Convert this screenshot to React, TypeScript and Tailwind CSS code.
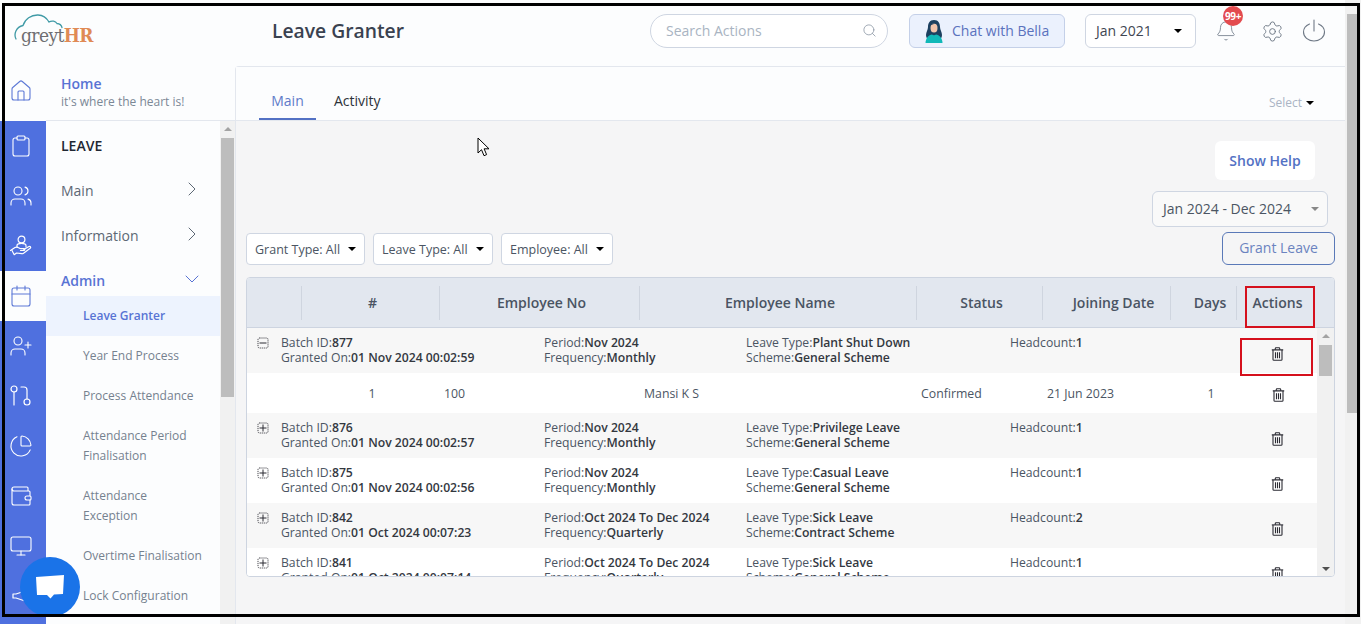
import { Bell, Calendar, ChevronDown, ChevronRight, Clipboard, House, Monitor, PieChart, Search, Settings, UserPlus, Users, Wallet } from "lucide-react";
import type { ReactNode } from "react";

function Caret({ className = "border-t-black" }: { className?: string }) {
  return <span className={`inline-block h-0 w-0 border-x-[4px] border-t-[4px] border-x-transparent ${className}`} />;
}

function HandIcon() {
  return (
    <svg width="24" height="24" viewBox="0 0 24 24" fill="none" stroke="currentColor" strokeWidth="1.2" strokeLinejoin="round" strokeLinecap="round">
      <circle cx="12.5" cy="5.5" r="3.4" />
      <path d="M8 13v-1.5c0-1.4 1.6-2.2 4.5-2.2s4.5.8 4.5 2.2V13" />
      <path d="M1.5 16.5 6 13.5c1.2-.7 2.2-.6 3.2 0l1.8 1h4c1 0 1 1.8 0 1.8h-3.500" />
      <path d="M14.800 15.500 20 12.600c1.300-.6 2.300.8 1.200 1.700l-6.700 5c-.6.4-1.200.5-1.900.4l-5.100-.7-2.300 1.700-2.200-4.200" />
    </svg>
  );
}

function BranchIcon() {
  return (
    <svg width="24" height="24" viewBox="0 0 24 24" fill="none" stroke="currentColor" strokeWidth="1.2" strokeLinecap="round">
      <circle cx="5" cy="5" r="3" />
      <path d="M5 8v13" />
      <path d="M12 3h3a3 3 0 0 1 3 3v9" />
      <circle cx="18" cy="18" r="3" />
    </svg>
  );
}

function SpeakerIcon() {
  return (
    <svg width="24" height="24" viewBox="0 0 24 24" fill="none" stroke="currentColor" strokeWidth="1.2" strokeLinejoin="round">
      <path d="M22 5 7 10H4v4h3l15 5z" />
    </svg>
  );
}

function TrashIcon() {
  return (
    <svg width="13" height="14" viewBox="0 0 13 14" fill="none" stroke="#2b2b33" strokeWidth="1.1">
      <path d="M.8 2.900h11.400" />
      <path d="M4.300 2.700V1.500c0-.4.3-.8.700-.8h3c.4 0 .7.4.700.8v1.200" />
      <path d="M2 3v9.400c0 .5.400.9.900.9h7.200c.5 0 .9-.4.900-.9V3" />
      <path d="M4.500 5.200v6M6.500 5.200v6M8.500 5.200v6" />
    </svg>
  );
}

function ExpandIcon({ open }: { open?: boolean }) {
  return (
    <svg width="12" height="12" viewBox="0 0 12 12" fill="none" stroke="#2b2b33">
      <rect x="1" y="1" width="10" height="10" rx="1.500" strokeWidth="1" strokeDasharray="1 1" />
      <path d="M2.500 6h7" strokeWidth="1" />
      {!open && <path d="M6 2.500v7" strokeWidth="1" />}
    </svg>
  );
}

function BellaAvatar() {
  return (
    <svg width="20" height="24" viewBox="0 0 20 24">
      <path d="M10 1C5.500 1 4 4.500 4 8c0 3-2 5-2 8 0 2 1 4 3 5h10c2-1 3-3 3-5 0-3-2-5-2-8 0-3.500-1.500-7-6-7z" fill="#1c4060" />
      <ellipse cx="10" cy="9" rx="3.500" ry="4.500" fill="#f1c4ac" />
      <path d="M6 6c2 0 5-1 6-3 1 1 2.500 2 2.500 4C14 4 8 4 6 6z" fill="#1c4060" />
      <path d="M1.500 24c0-5 3.500-8 6.500-8.500 1 1 3 1 4 0 3 .5 6.500 3.500 6.500 8.500z" fill="#10b8b8" />
    </svg>
  );
}

function Logo() {
  return (
    <div className="relative ml-[14px] h-[34px] w-[80px] shrink-0">
      <svg className="absolute left-0 top-0" width="50" height="30" viewBox="0 0 50 30" fill="none" stroke="#3f9aa6" strokeWidth="1.300" strokeLinecap="round">
        <path d="M2 25C-.5 20 2 13 9 11.500 11 5 17 .8 24 1c5.500.2 9 3.500 11 7 3-1.800 6.500-.8 8 1.500 3 .2 4.500 2 5 4" />
      </svg>
      <span className="absolute left-[7px] top-[9px] text-[19px] leading-[24px] text-[#6f6f72] [font-family:'DejaVu_Serif_Condensed','DejaVu_Serif',serif] tracking-[-0.6px]">
        greyt<span className="font-bold text-[#e08a55]">HR</span>
      </span>
    </div>
  );
}

function Header() {
  return (
    <div className="flex h-[66px] shrink-0 items-center pb-[4px]">
      <Logo />
      <div className="ml-[178px] text-[19.300px] font-semibold text-[#3a4250]">Leave Granter</div>
      <div className="ml-auto mr-[19px] flex items-center">
        <div className="flex h-[34px] w-[238px] items-center justify-between rounded-full border border-[#cfd6e2] bg-white pb-[2px] pl-[15px] pr-[10px] text-[14px] text-[#a9b4c2]">
          <span>Search Actions</span>
          <Search size={15} strokeWidth={1.3} className="text-[#8d97a5]" />
        </div>
        <div className="ml-[21px] flex h-[34px] w-[156px] items-center gap-[8px] rounded-md border border-[#c4d0e8] bg-[#ebf1fd] pl-[14px] text-[14px] text-[#5a72bd]">
          <BellaAvatar />
          <span className="pb-[2px]">Chat with Bella</span>
        </div>
        <div className="ml-[20px] flex h-[34px] w-[111px] items-center justify-between rounded-md border border-[#cfd6e2] bg-white pl-[10px] pr-[13px] text-[14px] text-[#3f4652]">
          <span className="pb-[2px]">Jan 2021</span>
          <Caret />
        </div>
        <div className="relative ml-[19px] flex w-[22px] justify-center text-[#7d8794]">
          <Bell size={24} strokeWidth={1} />
          <span className="absolute left-[8px] top-[-13px] flex h-[20px] w-[20px] items-center justify-center rounded-full bg-[#e34b4f] text-[10px] font-bold tracking-[-0.4px] text-white">99+</span>
        </div>
        <Settings size={23} strokeWidth={1} className="ml-[24px] text-[#6f7986]" />
        <svg width="24" height="26" viewBox="0 0 24 26" fill="none" stroke="#6f7986" strokeWidth="1.100" strokeLinecap="round" className="ml-[18px]">
          <path d="M12 2v11" />
          <path d="M7.500 6C3.800 7.600 1.500 10.600 1.500 14c0 5 4.500 9 10.500 9s10.500-4 10.500-9c0-3.400-2.300-6.400-6-8" />
        </svg>
      </div>
    </div>
  );
}

function RailItem({ blue, tall, children }: { blue?: boolean; tall?: boolean; children: ReactNode }) {
  const tone = blue ? "bg-[#4f70df] text-white" : "bg-[#fcfdfe] text-[#5d79d6]";
  return <div className={`flex w-[46px] shrink-0 items-center justify-center pr-[4px] ${tall ? "h-[55px] pb-[5px]" : "h-[50px]"} ${tone}`}>{children}</div>;
}

function Rail() {
  const s = { size: 24, strokeWidth: 1.1 };
  return (
    <div className="flex w-[46px] shrink-0 flex-col overflow-hidden">
      <RailItem tall><House {...s} /></RailItem>
      <RailItem blue><Clipboard {...s} /></RailItem>
      <RailItem blue><Users {...s} /></RailItem>
      <RailItem blue><HandIcon /></RailItem>
      <RailItem><Calendar {...s} /></RailItem>
      <RailItem blue><UserPlus {...s} /></RailItem>
      <RailItem blue><BranchIcon /></RailItem>
      <RailItem blue><PieChart {...s} /></RailItem>
      <RailItem blue><Wallet {...s} /></RailItem>
      <RailItem blue><Monitor {...s} /></RailItem>
      <RailItem blue><SpeakerIcon /></RailItem>
      <div className="flex-1 bg-[#4f70df]" />
    </div>
  );
}

const adminItems = ["Year End Process", "Process Attendance", "Attendance Period Finalisation", "Attendance Exception", "Overtime Finalisation", "Lock Configuration"];

function Sidebar() {
  return (
    <div className="flex w-[189px] shrink-0 flex-col">
      <div className="h-[55px] shrink-0 border-b border-[#e3e7ee] pl-[15px] pt-[9px]">
        <div className="text-[14px] font-semibold leading-[18px] text-[#5873d4]">Home</div>
        <div className="text-[12px] leading-[18px] text-[#7b8896]">it's where the heart is!</div>
      </div>
      <div className="flex min-h-0 flex-1">
        <div className="w-[174px] overflow-hidden pt-[2px] text-[14px] text-[#5d6875]">
          <div className="flex h-[45px] items-center pl-[15px] font-semibold text-[#1f2733]">LEAVE</div>
          <div className="flex h-[45px] items-center justify-between pl-[15px] pr-[16px]">
            Main <ChevronRight size={24} strokeWidth={1} className="mb-[3px]" />
          </div>
          <div className="flex h-[45px] items-center justify-between pl-[15px] pr-[16px]">
            Information <ChevronRight size={24} strokeWidth={1} className="mb-[3px]" />
          </div>
          <div className="flex h-[38px] items-center justify-between pl-[15px] pr-[16px] pt-[7px] font-semibold text-[#5873d4]">
            Admin <ChevronDown size={24} strokeWidth={1} className="mb-[3px]" />
          </div>
          <div className="flex h-[40px] items-center bg-[#edf3fe] pl-[37px] text-[12px] font-semibold text-[#5873d4]">Leave Granter</div>
          {adminItems.map(item => (
            <div key={item} className="py-[10px] pl-[37px] pr-[16px] text-[12px] leading-[20px] text-[#75818f]">{item}</div>
          ))}
        </div>
        <div className="flex w-[15px] flex-col items-center bg-[#f1f1f1]">
          <div className="mt-[6px] h-0 w-0 border-x-[4px] border-b-[4px] border-x-transparent border-b-[#a3a3a3]" />
          <div className="mt-[7px] h-[259px] w-[13px] bg-[#bdbdbd]" />
        </div>
      </div>
    </div>
  );
}

type Batch = { id: string; on: string; period: string; freq: string; leave: string; scheme: string; heads: string; gray?: boolean; open?: boolean };

const batches: Batch[] = [
  { id: "877", on: "01 Nov 2024 00:02:59", period: "Nov 2024", freq: "Monthly", leave: "Plant Shut Down", scheme: "General Scheme", heads: "1", gray: true, open: true },
  { id: "876", on: "01 Nov 2024 00:02:57", period: "Nov 2024", freq: "Monthly", leave: "Privilege Leave", scheme: "General Scheme", heads: "1", gray: true },
  { id: "875", on: "01 Nov 2024 00:02:56", period: "Nov 2024", freq: "Monthly", leave: "Casual Leave", scheme: "General Scheme", heads: "1" },
  { id: "842", on: "01 Oct 2024 00:07:23", period: "Oct 2024 To Dec 2024", freq: "Quarterly", leave: "Sick Leave", scheme: "Contract Scheme", heads: "2", gray: true },
  { id: "841", on: "01 Oct 2024 00:07:14", period: "Oct 2024 To Dec 2024", freq: "Quarterly", leave: "Sick Leave", scheme: "General Scheme", heads: "1" },
];

function Pair({ label, value }: { label: string; value: string }) {
  return (
    <div className="whitespace-nowrap">
      {label}:<span className="font-semibold text-[#33383f]">{value}</span>
    </div>
  );
}

function BatchRow({ b }: { b: Batch }) {
  return (
    <div className={`grid h-[45px] shrink-0 grid-cols-[34px_263px_202px_264px_230px_76px] pt-[7px] text-[12.200px] leading-[15px] text-[#4b5563] ${b.gray ? "bg-[#f7f7f7]" : "bg-white"}`}>
      <div className="pl-[10px] pt-[2px]"><ExpandIcon open={b.open} /></div>
      <div><Pair label="Batch ID" value={b.id} /><Pair label="Granted On" value={b.on} /></div>
      <div><Pair label="Period" value={b.period} /><Pair label="Frequency" value={b.freq} /></div>
      <div><Pair label="Leave Type" value={b.leave} /><Pair label="Scheme" value={b.scheme} /></div>
      <div><Pair label="Headcount" value={b.heads} /></div>
      <div className="flex justify-center pr-[1px] pt-[12px]"><TrashIcon /></div>
    </div>
  );
}

function DetailRow() {
  return (
    <div className="grid h-[40px] shrink-0 grid-cols-[54px_142px_200px_277px_126px_104px_91px_76px] items-center bg-white pt-[3px] text-[12.300px] text-[#4b5563]">
      <div />
      <div className="text-center">1</div>
      <div className="pl-[1px]">100</div>
      <div className="pl-[1px]">Mansi K S</div>
      <div className="pl-[1px]">Confirmed</div>
      <div className="pl-[1px]">21 Jun 2023</div>
      <div className="pl-[31px] text-center">1</div>
      <div className="flex justify-center pr-[1px]"><TrashIcon /></div>
    </div>
  );
}

function Table() {
  const th = "flex h-[34px] items-center justify-center border-l border-[#cfd5df]";
  return (
    <div className="mt-[12px] h-[300px] w-[1089px] overflow-hidden rounded-[4px] border border-[#cdd4e0] bg-white">
      <div className="grid h-[50px] grid-cols-[54px_138px_200px_277px_126px_128px_66px_1fr] items-center border-b border-[#cdd4e0] bg-[#e2e7ef] text-[14px] font-semibold text-[#4a5463]">
        <div />
        <div className={`${th} pl-[4px]`}>#</div>
        <div className={`${th} pl-[4px]`}>Employee No</div>
        <div className={`${th} pl-[4px]`}>Employee Name</div>
        <div className={`${th} pl-[4px]`}>Status</div>
        <div className={`${th} pl-[14px]`}>Joining Date</div>
        <div className={`${th} pl-[13px]`}>Days</div>
        <div className={`${th} pr-[16px]`}>Actions</div>
      </div>
      <div className="flex h-[249px]">
        <div className="flex w-[1070px] flex-col overflow-hidden">
          {batches.map(b => (
            <div key={b.id} className="contents">
              <BatchRow b={b} />
              {b.open && <DetailRow />}
            </div>
          ))}
        </div>
        <div className="flex flex-1 flex-col items-center justify-between bg-[#f1f1f1] py-[6px]">
          <div>
            <div className="mx-auto h-0 w-0 border-x-[4px] border-b-[4px] border-x-transparent border-b-[#a3a3a3]" />
            <div className="mt-[7px] h-[31px] w-[13px] bg-[#bdbdbd]" />
          </div>
          <div className="h-0 w-0 border-x-[4px] border-t-[4px] border-x-transparent border-t-[#505050]" />
        </div>
      </div>
    </div>
  );
}

function FilterButton({ label, width }: { label: string; width: string }) {
  return (
    <div className={`flex h-[32px] items-center justify-between rounded-[4px] border border-[#cfd6e2] bg-white px-[8px] text-[12.500px] text-[#4b5563] ${width}`}>
      <span className="pt-[2px]">{label}</span>
      <Caret />
    </div>
  );
}

function Main() {
  return (
    <div className="min-w-0 flex-1 rounded-tl-[4px] border-l border-t border-[#e3e7ee] bg-[#f5f5f6]">
      <div className="flex h-[54px] items-end justify-between border-b border-[#e3e7ee] bg-[#fcfdfe] pl-[23px] pr-[31px]">
        <div className="flex text-[14px]">
          <div className="-mb-[1px] flex h-[40px] w-[57px] items-center justify-center border-b-2 border-[#5371c4] pt-[2px] text-[#5f7bc9]">Main</div>
          <div className="ml-[18px] flex h-[40px] items-center text-[#2c323a]">Activity</div>
        </div>
        <div className="mb-[8px] flex items-center gap-[4px] text-[12px] text-[#aab4c4]">
          Select <Caret />
        </div>
      </div>
      <div className="px-[10px] pt-[20px]">
        <div className="flex justify-end pr-[20px]">
          <div className="flex h-[39px] w-[100px] items-center justify-center rounded-md bg-white text-[14px] font-semibold text-[#5371c4]">Show Help</div>
        </div>
        <div className="mt-[11px] flex justify-end pr-[7px]">
          <div className="flex h-[36px] w-[176px] items-center justify-between rounded-md border border-[#cfd6e2] bg-[#f9f9f9] pl-[10px] pr-[8px] text-[14px] text-[#4b5563]">
            <span className="pb-[2px]">Jan 2024 - Dec 2024</span>
            <Caret className="border-t-[#888888]" />
          </div>
        </div>
        <div className="mt-[5px] flex items-start justify-between">
          <div className="mt-[1px] flex gap-[8px]">
            <FilterButton label="Grant Type: All" width="w-[119px]" />
            <FilterButton label="Leave Type: All" width="w-[120px]" />
            <FilterButton label="Employee: All" width="w-[112px]" />
          </div>
          <div className="flex h-[33px] w-[113px] items-center justify-center rounded-md border border-[#5a79b8] pb-[2px] text-[14px] text-[#6b83c0]">Grant Leave</div>
        </div>
        <Table />
      </div>
    </div>
  );
}

export default function App() {
  return (
    <div className="relative flex h-[624px] w-[1361px] overflow-hidden bg-[#fcfdfe] [font-family:'Open_Sans',sans-serif]">
      <div className="flex w-[1345px] shrink-0 flex-col">
        <Header />
        <div className="flex min-h-0 flex-1">
          <Rail />
          <Sidebar />
          <Main />
        </div>
      </div>
      <div className="w-[16px] bg-[#f1f1f1] pl-[2px] pt-[14px]">
        <div className="h-[399px] w-[10px] bg-[#bdbdbd]" />
      </div>

      <div className="absolute left-[1245px] top-[286px] h-[42px] w-[70px] border-2 border-[#d5101c]" />
      <div className="absolute left-[1240px] top-[338px] h-[38px] w-[73px] border-2 border-[#d5101c]" />

      <svg className="absolute left-[477px] top-[137px]" width="14" height="20" viewBox="0 0 14 20">
        <path d="M1 1v15l3.500-3.300 2.500 6 2.600-1.100-2.500-5.800H12z" fill="white" stroke="black" strokeWidth="1" />
      </svg>

      <div className="absolute left-[20px] top-[557px] flex h-[60px] w-[60px] items-center justify-center rounded-full bg-[#1a73e8]">
        <svg width="30" height="26" viewBox="0 0 30 26">
          <path d="M1 3 29 1l-1 19-9 .5-3.500 4-3.500-3.500L2 21z" fill="white" />
        </svg>
      </div>

      <div className="pointer-events-none absolute left-[2px] top-[3px] h-[614px] w-[1358px] border-[3px] border-black" />
    </div>
  );
}
